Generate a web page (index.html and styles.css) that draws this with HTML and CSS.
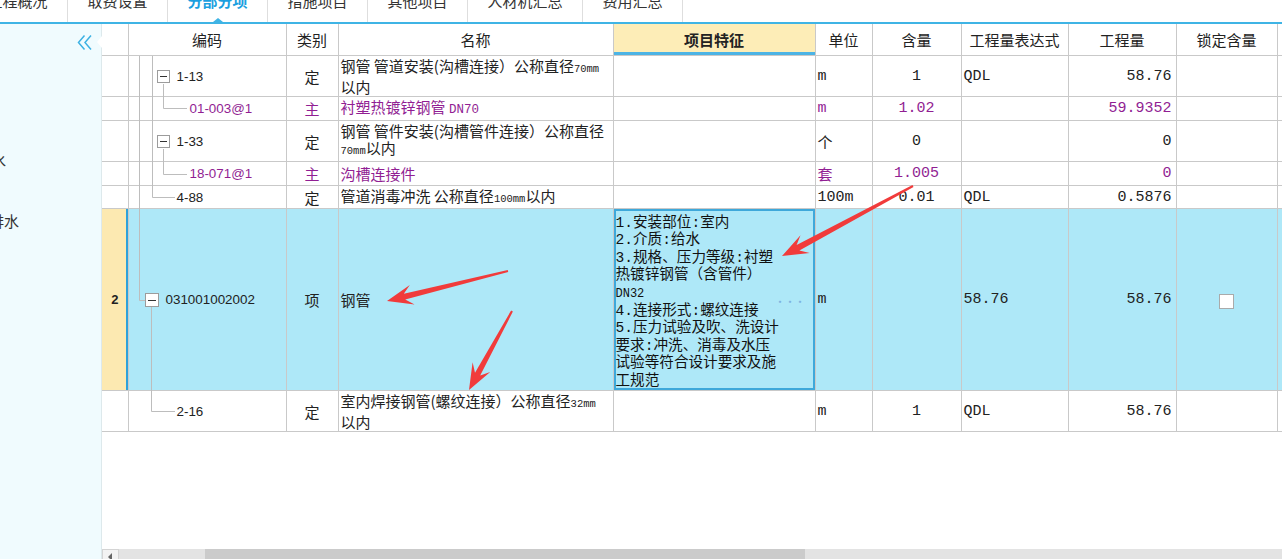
FILE: index.html
```html
<!DOCTYPE html>
<html lang="zh-CN">
    <head>
        <meta charset="UTF-8" />
        <meta name="viewport" content="width=device-width, initial-scale=1.0" />
        <title>分部分项</title>
        <link rel="stylesheet" href="styles.css">
    </head>
    <body>
        <div class="tabs">
            <div class="tab first"><span>工程概况</span></div>
            <div class="tab"><span>取费设置</span></div>
            <div class="tab active"><span>分部分项</span></div>
            <div class="tab"><span>措施项目</span></div>
            <div class="tab"><span>其他项目</span></div>
            <div class="tab wide"><span>人材机汇总</span></div>
            <div class="tab"><span>费用汇总</span></div>
        </div>

        <div class="main">
            <aside class="side">
                <div class="collapse">
                    <svg width="16" height="17" viewBox="0 0 16 17">
                        <path d="M7.5 1.5 L1.5 8.5 L7.5 15.5 M14 1.5 L8 8.5 L14 15.5" fill="none" stroke="#3cb1e3" stroke-width="1.5"/>
                    </svg>
                </div>
                <div class="side-item s1">给水</div>
                <div class="side-item s2">排水</div>
            </aside>

            <section class="grid">
                <table class="sheet">
                    <colgroup>
                        <col class="w-no"><col class="w-code"><col class="w-type"><col class="w-name">
                        <col class="w-feat"><col class="w-unit"><col class="w-cont"><col class="w-expr">
                        <col class="w-qty"><col class="w-lock"><col class="w-more">
                    </colgroup>
                    <thead>
                        <tr>
                            <th></th>
                            <th>编码</th>
                            <th>类别</th>
                            <th>名称</th>
                            <th class="feat-head">项目特征</th>
                            <th>单位</th>
                            <th>含量</th>
                            <th>工程量表达式</th>
                            <th>工程量</th>
                            <th>锁定含量</th>
                            <th></th>
                        </tr>
                    </thead>
                    <tbody>
                        <tr class="h41">
                            <td></td>
                            <td><div class="code lv1"><span class="box"></span>1-13</div></td>
                            <td class="center">定</td>
                            <td class="name">钢管 管道安装(沟槽连接）公称直径<span class="tiny">70mm</span><br>以内</td>
                            <td></td>
                            <td class="unit">m</td>
                            <td class="center mono">1</td>
                            <td class="mono">QDL</td>
                            <td class="right mono">58.76</td>
                            <td></td>
                            <td></td>
                        </tr>
                        <tr class="h24 sub">
                            <td></td>
                            <td><div class="code lv2">01-003@1</div></td>
                            <td class="center">主</td>
                            <td class="name">衬塑热镀锌钢管 <span class="mono">DN70</span></td>
                            <td></td>
                            <td class="unit">m</td>
                            <td class="center mono">1.02</td>
                            <td></td>
                            <td class="right mono">59.9352</td>
                            <td></td>
                            <td></td>
                        </tr>
                        <tr class="h41">
                            <td></td>
                            <td><div class="code lv1"><span class="box"></span>1-33</div></td>
                            <td class="center">定</td>
                            <td class="name">钢管 管件安装(沟槽管件连接）公称直径<br><span class="tiny">70mm</span>以内</td>
                            <td></td>
                            <td class="unit cjk">个</td>
                            <td class="center mono">0</td>
                            <td></td>
                            <td class="right mono">0</td>
                            <td></td>
                            <td></td>
                        </tr>
                        <tr class="h24 sub">
                            <td></td>
                            <td><div class="code lv2">18-071@1</div></td>
                            <td class="center">主</td>
                            <td class="name">沟槽连接件</td>
                            <td></td>
                            <td class="unit cjk">套</td>
                            <td class="center mono">1.005</td>
                            <td></td>
                            <td class="right mono">0</td>
                            <td></td>
                            <td></td>
                        </tr>
                        <tr class="h23">
                            <td></td>
                            <td><div class="code lv1 nobox">4-88</div></td>
                            <td class="center">定</td>
                            <td class="name">管道消毒冲洗 公称直径<span class="tiny">100mm</span>以内</td>
                            <td></td>
                            <td class="unit">100m</td>
                            <td class="center mono">0.01</td>
                            <td class="mono">QDL</td>
                            <td class="right mono">0.5876</td>
                            <td></td>
                            <td></td>
                        </tr>
                        <tr class="h182 selected">
                            <td class="no">2</td>
                            <td><div class="code lv0"><span class="box"></span>031001002002</div></td>
                            <td class="center">项</td>
                            <td class="name">钢管</td>
                            <td class="feat">
                                <div class="feat-text">1.安装部位:室内<br>2.介质:给水<br>3.规格、压力等级:衬塑<br>热镀锌钢管（含管件）<br><span class="dn">DN32</span><br>4.连接形式:螺纹连接<br>5.压力试验及吹、洗设计<br>要求:冲洗、消毒及水压<br>试验等符合设计要求及施<br>工规范</div>
                                <span class="more">···</span>
                            </td>
                            <td class="unit">m</td>
                            <td></td>
                            <td class="mono">58.76</td>
                            <td class="right mono">58.76</td>
                            <td class="center"><span class="check"></span></td>
                            <td></td>
                        </tr>
                        <tr class="h41">
                            <td></td>
                            <td><div class="code lv1 nobox">2-16</div></td>
                            <td class="center">定</td>
                            <td class="name">室内焊接钢管(螺纹连接）公称直径<span class="tiny">32mm</span><br>以内</td>
                            <td></td>
                            <td class="unit">m</td>
                            <td class="center mono">1</td>
                            <td class="mono">QDL</td>
                            <td class="right mono">58.76</td>
                            <td></td>
                            <td></td>
                        </tr>
                    </tbody>
                </table>
                <div class="filler"></div>
                <div class="hscroll">
                    <div class="arrow-btn"></div>
                    <div class="track"><div class="thumb"></div></div>
                </div>
            </section>
        </div>

        <!-- tree connectors and the red annotation arrows drawn on top -->
        <svg class="overlay" width="1282" height="559" viewBox="0 0 1282 559">
            <g stroke="#bdbdbd" stroke-width="1" fill="none">
                <path d="M139.5 56 V300.5 H145"/>
                <path d="M152.5 56 V197.5 H175"/>
                <path d="M163.5 84 V108.5 H187"/>
                <path d="M163.5 149 V174.5 H187"/>
                <path d="M151.5 307 V411.5 H175"/>
            </g>
            <g fill="#f13b3b">
                <polygon points="912.5,185.1 796.6,245.1 800.5,235.2 782,256 809.7,253.0 799.4,250.5 913.5,186.9"/>
                <polygon points="507.8,270 403.8,293.8 409.8,285 387,301 414.6,304.4 405.2,299.6 508.2,272"/>
                <polygon points="512.9,311.5 480.2,375.6 490.2,371.9 469,390 472.6,362.3 475.0,372.8 511.1,310.5"/>
            </g>
        </svg>
    </body>
</html>
```

FILE: styles.css
```css
html, body {
    margin: 0;
    padding: 0;
    width: 1282px;
    height: 559px;
    overflow: hidden;
    background: #fff;
    font-family: "Noto Sans CJK SC", "Liberation Sans", sans-serif;
    color: #222;
}

/* top tab strip */
.tabs {
    display: flex;
    height: 22px;
    border-bottom: 2px solid #3fb4e5;
    overflow: hidden;
}

.tab {
    position: relative;
    width: 99px;
    border-right: 1px solid #dedede;
    display: flex;
    justify-content: center;
    font-size: 15px;
    line-height: 22px;
    color: #333;
}

.tab span {
    margin-top: -10px;
}

.tab.first {
    margin-left: -32px;
}

.tab.wide {
    width: 114px;
}

.tab.active {
    color: #1b9fdf;
    font-weight: bold;
}

.tab.active::after {
    content: "";
    position: absolute;
    left: 45px;
    bottom: 0;
    border-left: 5px solid transparent;
    border-right: 5px solid transparent;
    border-bottom: 4px solid #3fb4e5;
}

/* body */
.main {
    display: flex;
    height: 535px;
}

.side {
    position: relative;
    width: 101px;
    flex: none;
    background: #f0fbfe;
    border-right: 1px solid #dde9ec;
    display: flex;
    flex-direction: column;
}

.collapse {
    display: flex;
    justify-content: flex-end;
    padding: 10px 8px 0 0;
    height: 17px;
}

.side::after {
    content: "";
    position: absolute;
    right: -1px;
    top: 12px;
    border-top: 6px solid transparent;
    border-bottom: 6px solid transparent;
    border-right: 5px solid #fff;
}

.side-item {
    font-size: 15px;
    line-height: 20px;
    color: #333;
    white-space: nowrap;
}

.side-item.s1 {
    margin: 99px 0 0 -24px;
}

.side-item.s2 {
    margin: 41px 0 0 -11px;
}

.grid {
    flex: 1;
    display: flex;
    flex-direction: column;
    overflow: hidden;
}

/* the sheet */
.sheet {
    table-layout: fixed;
    border-collapse: collapse;
    width: 1215px;
    flex: none;
}

.w-no { width: 26px; }
.w-code { width: 158px; }
.w-type { width: 52px; }
.w-name { width: 275px; }
.w-feat { width: 202px; }
.w-unit { width: 57px; }
.w-cont { width: 89px; }
.w-expr { width: 107px; }
.w-qty { width: 108px; }
.w-lock { width: 101px; }
.w-more { width: 40px; }

.sheet th,
.sheet td {
    border: 1px solid #c9c9c9;
    padding: 0 2px;
    vertical-align: middle;
    overflow: hidden;
    white-space: nowrap;
}

.sheet tr > :first-child {
    border-left: none;
}

.sheet th {
    height: 31px;
    font-size: 15px;
    font-weight: normal;
    color: #222;
    text-align: center;
    border-top: none;
}

.sheet th.feat-head {
    background: #fdedb7;
    font-weight: bold;
    box-shadow: inset 0 -3px 0 #4db4e5;
}

.sheet td {
    font-size: 15px;
    line-height: 17px;
}

.h41 td { height: 40px; }
.h24 td { height: 23px; }
.h23 td { height: 22px; }
.h182 td { height: 181px; }

.center { text-align: center; }
.right { text-align: right; }
.sheet td.right { padding-right: 4px; }

.mono {
    font-family: "Liberation Mono", "Noto Sans CJK SC", monospace;
    font-size: 12.5px;
}

.tiny {
    font-family: "Liberation Mono", monospace;
    font-size: 10.5px;
}

.unit {
    font-family: "Liberation Mono", monospace;
    font-size: 10.5px;
}

.unit.cjk {
    font-family: "Noto Sans CJK SC", sans-serif;
    font-size: 15px;
}

.name {
    white-space: normal;
    line-height: 17px;
}

.sub td {
    color: #911e93;
}

/* code column with tree expander boxes */
.code {
    display: flex;
    align-items: center;
    font-family: "Liberation Sans", sans-serif;
    font-size: 13.4px;
}

.sheet td:nth-child(2) {
    padding: 0;
}

.code.lv0 { padding-left: 16px; }
.code.lv1 { padding-left: 28px; }
.code.lv1.nobox { padding-left: 48px; }
.code.lv2 { padding-left: 61px; }

.box {
    position: relative;
    width: 11px;
    height: 11px;
    border: 1px solid #9c9c9c;
    background: #fff;
    margin-right: 7px;
    flex: none;
}

.lv0 .box {
    width: 12px;
    height: 12px;
    margin-right: 7px;
}

.box::after {
    content: "";
    position: absolute;
    left: 2px;
    right: 2px;
    top: 50%;
    height: 1px;
    background: #333;
}

/* selected row */
.selected td {
    background: #aee8f8;
}

.selected td.no {
    background: #fce9b1;
    text-align: center;
    font-weight: bold;
    font-size: 13px;
    font-family: "Liberation Sans", sans-serif;
    box-shadow: inset -2px 0 0 #2ea2da;
}

.selected td.feat {
    position: relative;
    box-shadow: inset 0 0 0 2px #3ea8da;
    vertical-align: bottom;
}

.feat-text {
    font-family: "Liberation Mono", "Noto Sans CJK SC", monospace;
    font-size: 14.6px;
    line-height: 17.4px;
    color: #111;
}

.feat-text .dn {
    font-size: 12px;
}

.more {
    position: absolute;
    right: 10px;
    top: 84px;
    font-size: 11px;
    color: #7fb3e0;
    letter-spacing: -1px;
}

.check {
    display: inline-block;
    width: 13px;
    height: 13px;
    border: 1px solid #aaa;
    background: #fff;
    vertical-align: middle;
}

.filler {
    flex: 1;
}

/* horizontal scrollbar, partly cut by the window */
.hscroll {
    display: flex;
    height: 10px;
    flex: none;
}

.arrow-btn {
    width: 15px;
    background: #f3f3f3;
    border: 1px solid #d4d4d4;
    border-bottom: none;
    position: relative;
}

.arrow-btn::after {
    content: "";
    position: absolute;
    left: 5px;
    top: 3px;
    border-top: 4px solid transparent;
    border-bottom: 4px solid transparent;
    border-right: 4px solid #666;
}

.track {
    flex: 1;
    background: #e3e3e3;
    padding-left: 86px;
}

.thumb {
    width: 600px;
    height: 100%;
    background: #cbcbcb;
}

.overlay {
    position: absolute;
    left: 0;
    top: 0;
    pointer-events: none;
}
```
